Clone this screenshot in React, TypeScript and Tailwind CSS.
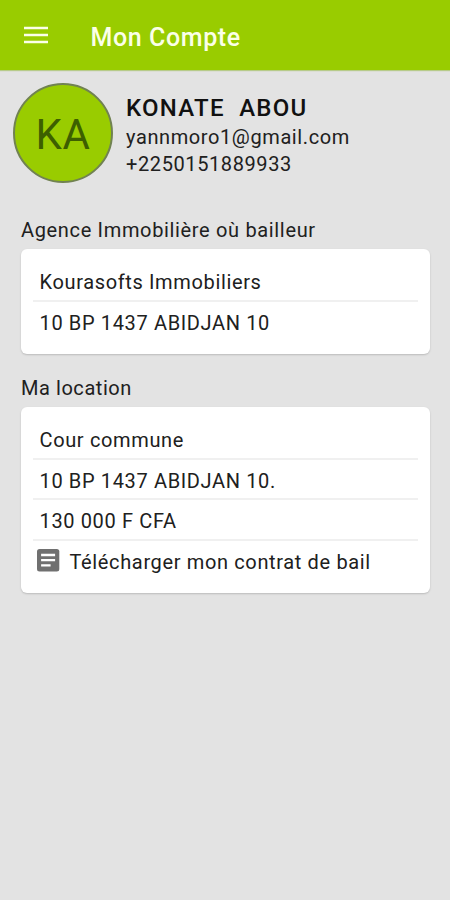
import type { ReactNode } from 'react';

function Row({ children, last = false, icon = false }: { children: ReactNode; last?: boolean; icon?: boolean }) {
  return (
    <li
      className={`flex h-[40.67px] items-center whitespace-nowrap text-[20px] tracking-[0.64px] ${
        icon ? 'pl-[2.5px]' : 'pl-[6.5px]'
      } ${last ? 'pt-[2px]' : 'border-b-2 border-[#f0f0f0] pt-[3px]'}`}
    >
      {children}
    </li>
  );
}

function Card({ children }: { children: ReactNode }) {
  return (
    <ul className="ml-[21px] mr-5 rounded-[6px] bg-white pt-[12.3px] pb-[11.2px] pl-3 pr-3 shadow-[0_1px_2px_rgba(0,0,0,0.18)]">
      {children}
    </ul>
  );
}

function ArticleIcon() {
  return (
    <svg className="mr-[10px] -mt-[4px] size-[24px] shrink-0" viewBox="0 0 24 24" aria-hidden="true">
      <rect x="1" y="1" width="22.3" height="22.5" rx="2.5" fill="#707070" />
      <path d="M5.1 7h14M5.1 12.2h14M5.1 17.3h9.5" stroke="#fff" strokeWidth="2.3" />
    </svg>
  );
}

export default function App() {
  return (
    <div className="h-[900px] w-[450px] overflow-hidden bg-[#e3e3e3] font-['Roboto','Liberation_Sans',sans-serif] text-[#202020]">
      <header className="flex h-[70px] items-center bg-[#99cc00] pl-6 text-[#fbffe8] shadow-[0_1px_1px_rgba(140,180,50,0.5)]">
        <svg className="h-[18px] w-6" viewBox="0 0 24 18" role="img" aria-label="Menu">
          <path d="M0 2h24M0 9h24M0 16h24" stroke="currentColor" strokeWidth="2.6" />
        </svg>
        <h1 className="mt-[6px] ml-[42.5px] text-[25px] font-medium leading-7 tracking-[0.6px]">Mon Compte</h1>
      </header>
      <section className="flex h-[141px] pt-[13px] pl-[13px]">
        <div className="flex size-[100px] items-center justify-center rounded-full border-2 border-[#718252] bg-[#99cc00] pt-[3px] text-[42px] text-[#3d5f00]">
          <span className="tracking-[0.5px]">KA</span>
        </div>
        <div className="ml-[13px] pt-[11px]">
          <h2 className="whitespace-pre text-[24px] font-medium leading-7 tracking-[1.25px] text-[#111]">KONATE  ABOU</h2>
          <p className="mt-[2px] text-[20px] leading-[26.5px] tracking-[0.6px]">yannmoro1@gmail.com</p>
          <p className="text-[20px] leading-[26.5px] tracking-[0.6px]">+2250151889933</p>
        </div>
      </section>
      <h3 className="flex h-[38px] items-center pl-[21px] text-[20px] tracking-[0.66px]">Agence Immobilière où bailleur</h3>
      <Card>
        <Row>Kourasofts Immobiliers</Row>
        <Row last>10 BP 1437 ABIDJAN 10</Row>
      </Card>
      <h3 className="mt-[15px] flex h-[38px] items-center pl-[21px] text-[20px] tracking-[0.56px]">Ma location</h3>
      <Card>
        <Row>Cour commune</Row>
        <Row>10 BP 1437 ABIDJAN 10.</Row>
        <Row>130 000 F CFA</Row>
        <Row last icon>
          <ArticleIcon />
          Télécharger mon contrat de bail
        </Row>
      </Card>
    </div>
  );
}
